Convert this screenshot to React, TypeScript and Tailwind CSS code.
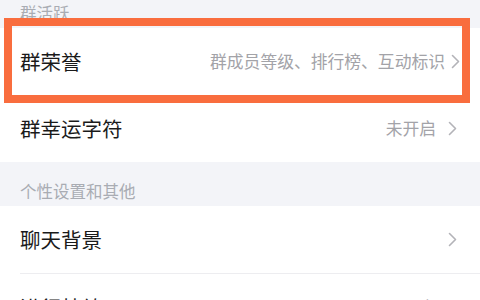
import React from "react";

function Chevron() {
  return (
    <svg width="9" height="15" viewBox="0 0 9 15" className="shrink-0">
      <polyline points="1.5,1.5 7.5,7.5 1.5,13.5" fill="none" stroke="#b3b3b8" strokeWidth="1.6" strokeLinecap="round" strokeLinejoin="round" />
    </svg>
  );
}

function Row({
  title,
  value,
  divider,
  tight,
}: {
  title: string;
  value?: string;
  divider?: boolean;
  tight?: boolean;
}) {
  return (
    <div className="relative bg-white">
      <div className={`flex h-[67px] items-center pl-5 ${tight ? "pr-[20px]" : "pr-[23px]"}`}>
        <span className="flex-1 text-[20.5px] text-[#1a1a1a]">{title}</span>
        {value && (
          <span className={`text-[16.8px] text-[#a3a3a8] ${tight ? "mr-[6px]" : "mr-[12px]"}`}>{value}</span>
        )}
        <Chevron />
      </div>
      {divider && <div className="ml-5 h-px bg-[#ededf0]" />}
    </div>
  );
}

function SectionHeader({ label, first }: { label: string; first?: boolean }) {
  return (
    <div className={`flex items-end bg-[#f3f4f8] pb-[7px] pl-5 ${first ? "h-[28px]" : "h-[44px]"}`}>
      <span className="text-[16.5px] leading-4 text-[#a9acb3]">{label}</span>
    </div>
  );
}

export default function App() {
  return (
    <div
      className="relative h-[300px] w-[480px] overflow-hidden bg-white"
      style={{ fontFamily: '"Noto Sans CJK SC", "Noto Sans", sans-serif' }}
    >
      <SectionHeader label="群活跃" first />
      <Row title="群荣誉" value="群成员等级、排行榜、互动标识" tight />
      <Row title="群幸运字符" value="未开启" />
      <SectionHeader label="个性设置和其他" />
      <Row title="聊天背景" divider />
      <Row title="进行特效" value="已开启" />

      {/* annotation box */}
      <div className="absolute left-[4px] top-[18px] h-[85px] w-[466px] border-[8px] border-[#f96d3e]" />
    </div>
  );
}
